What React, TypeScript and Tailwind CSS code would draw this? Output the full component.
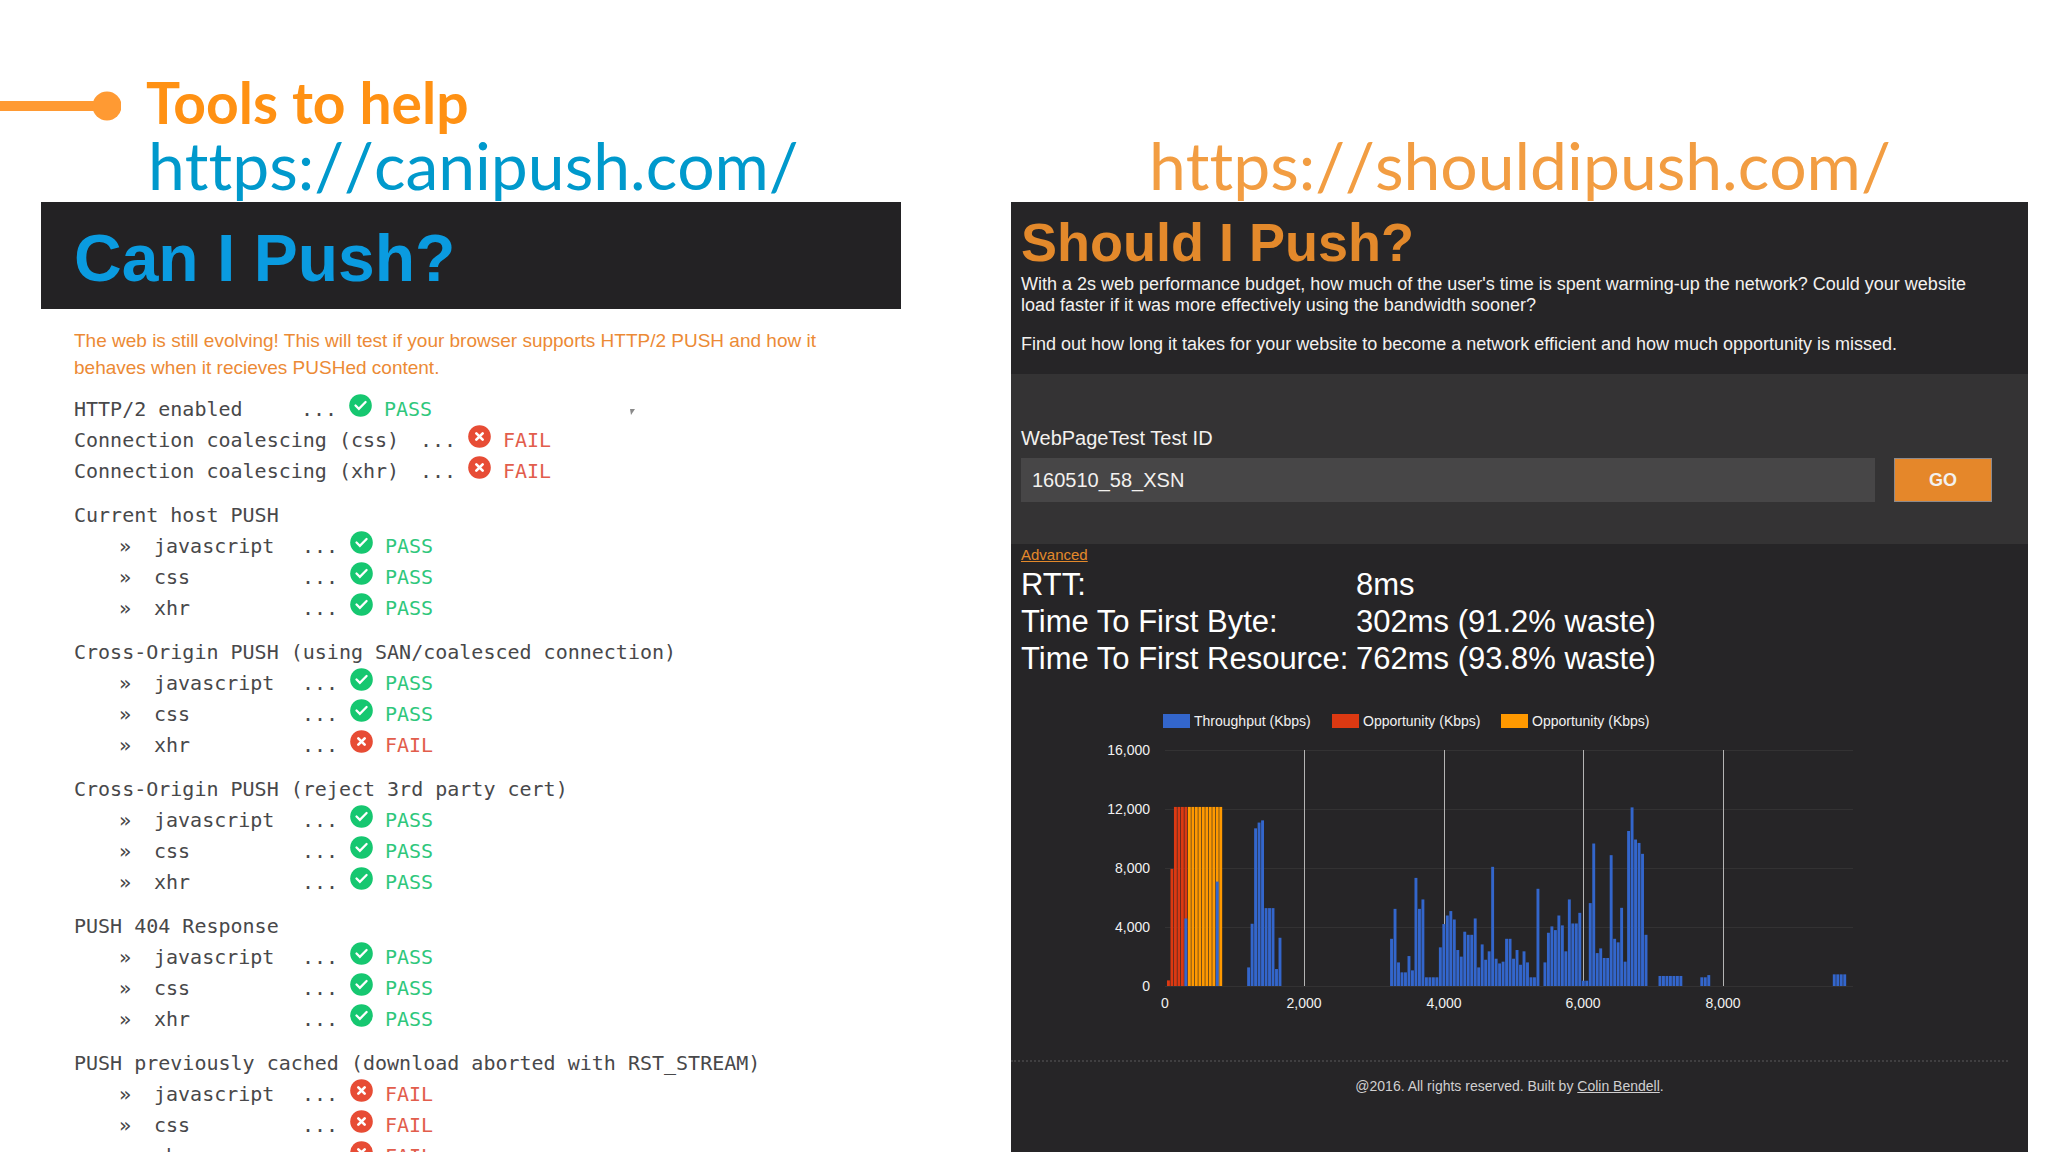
import { useState } from "react";

type Result = "PASS" | "FAIL";

interface Test {
  name: string;
  result: Result;
}

interface TestGroup {
  title: string;
  tests: Test[];
}

const groups: TestGroup[] = [
  {
    title: "Current host PUSH",
    tests: [
      { name: "javascript", result: "PASS" },
      { name: "css", result: "PASS" },
      { name: "xhr", result: "PASS" },
    ],
  },
  {
    title: "Cross-Origin PUSH (using SAN/coalesced connection)",
    tests: [
      { name: "javascript", result: "PASS" },
      { name: "css", result: "PASS" },
      { name: "xhr", result: "FAIL" },
    ],
  },
  {
    title: "Cross-Origin PUSH (reject 3rd party cert)",
    tests: [
      { name: "javascript", result: "PASS" },
      { name: "css", result: "PASS" },
      { name: "xhr", result: "PASS" },
    ],
  },
  {
    title: "PUSH 404 Response",
    tests: [
      { name: "javascript", result: "PASS" },
      { name: "css", result: "PASS" },
      { name: "xhr", result: "PASS" },
    ],
  },
  {
    title: "PUSH previously cached (download aborted with RST_STREAM)",
    tests: [
      { name: "javascript", result: "FAIL" },
      { name: "css", result: "FAIL" },
      { name: "xhr", result: "FAIL" },
    ],
  },
];

// Kbps samples, one per 50ms, keyed by the index of the first sample
const throughput: [number, number[]][] = [
  [6, [4580]],
  [15, [7080]],
  [24, [1260, 4220, 10690, 11080, 11230, 5280, 5280, 5280, 1150, 3270]],
  [65, [3200, 5230, 1600, 925, 925, 2030, 1060, 7330, 5230, 5870, 590, 590, 590, 590]],
  [79, [2620, 4200, 4780, 5080, 4510, 2440, 1990, 3680, 3470, 3470, 4580, 1260, 2820]],
  [92, [1780, 2350, 8080, 1850, 1530, 1650, 3200, 3200, 1850, 2440, 1440, 2350, 1600]],
  [105, [590, 590, 6590]],
  [109, [1600, 3610, 4040, 3790, 4780, 4110, 2350, 5870, 4240, 4240, 4960, 360, 360]],
  [122, [5620, 9660, 2230, 2550, 1900, 1900, 8870, 3200, 2960, 5300, 1650]],
  [133, [10510, 12110, 9930, 9700, 8960, 3470]],
  [142, [680, 680, 680, 680, 680, 680, 680]],
  [154, [590, 590, 740]],
  [192, [790, 790, 790, 790]],
];
const missed: [number, number[]][] = [[1, [380, 7940, 12140, 12140, 12140, 12140]]];
const wasted: [number, number[]][] = [
  [7, [12140, 12140, 12140, 12140, 12140, 12140, 12140, 12140, 12140, 12140]],
];

const LEFT = 74;
const BOTTOM = 286;
const BIN = 3.486;
const yOf = (kbps: number) => BOTTOM - (kbps / 16000) * 236;

function Bars({ data, fill }: { data: [number, number[]][]; fill: string }) {
  return (
    <g fill={fill}>
      {data.flatMap(([start, values]) =>
        values.map((v, i) => (
          <rect
            key={start + i}
            x={LEFT + (start + i) * BIN - 1.5}
            y={yOf(v)}
            width={2.9}
            height={BOTTOM - yOf(v)}
          />
        )),
      )}
    </g>
  );
}

function ThroughputChart() {
  const legend = [
    { x: 72, color: "#3366cc", label: "Throughput (Kbps)" },
    { x: 241, color: "#dc3912", label: "Opportunity (Kbps)" },
    { x: 410, color: "#ff9900", label: "Opportunity (Kbps)" },
  ];
  return (
    <svg
      width="780"
      height="320"
      viewBox="0 0 780 320"
      className="block text-sm"
      fill="#f1f1f1"
      role="img"
      aria-label="Throughput and opportunity over time"
    >
      {legend.map((l) => (
        <g key={l.x}>
          <rect x={l.x} y="14" width="27" height="14" fill={l.color} />
          <text x={l.x + 31} y="26">
            {l.label}
          </text>
        </g>
      ))}
      {[0, 4000, 8000, 12000, 16000].map((v) => (
        <g key={v}>
          <rect x={LEFT} y={Math.round(yOf(v))} width="688" height="1" fill="#333233" />
          <text x="59" y={Math.round(yOf(v)) + 5} textAnchor="end">
            {v.toLocaleString("en-US")}
          </text>
        </g>
      ))}
      {[0, 2000, 4000, 6000, 8000].map((v) => {
        const x = Math.round(LEFT + (v / 50) * BIN);
        return (
          <g key={v}>
            {v > 0 && <rect x={x} y="50" width="1" height="236" fill="#b4b4b4" />}
            <text x={x} y="308" textAnchor="middle">
              {v.toLocaleString("en-US")}
            </text>
          </g>
        );
      })}
      <Bars data={missed} fill="#dc3912" />
      <Bars data={wasted} fill="#ff9900" />
      <Bars data={throughput} fill="#3366cc" />
    </svg>
  );
}

function ResultIcon({ result }: { result: Result }) {
  return (
    <svg viewBox="0 0 24 24" className="mb-2 size-[23px] shrink-0" aria-hidden="true">
      <circle cx="12" cy="12" r="11.8" fill={result === "PASS" ? "#16c770" : "#e74c35"} />
      {result === "PASS" ? (
        <path
          d="M6.8 12l3.5 3.5 7-7.2"
          fill="none"
          stroke="#fff"
          strokeWidth="2.4"
          strokeLinecap="round"
        />
      ) : (
        <path
          d="M8.7 8.7l6.6 6.6M15.3 8.7l-6.6 6.6"
          fill="none"
          stroke="#fff"
          strokeWidth="2.8"
          strokeLinecap="round"
        />
      )}
    </svg>
  );
}

function Status({ result }: { result: Result }) {
  return (
    <>
      <span className="w-12">...</span>
      <ResultIcon result={result} />
      <span className={result === "PASS" ? "ml-3 text-[#2fc77c]" : "ml-3 text-[#e25d4c]"}>
        {result}
      </span>
    </>
  );
}

function CanIPush() {
  return (
    <section>
      <h2 className="pb-0.5 pl-[107px] font-[Lato,sans-serif] text-[66px] leading-[70px] text-[#0099cc] [font-kerning:none] [font-variant-ligatures:none]">
        <a href="https://canipush.com/">https://canipush.com/</a>
      </h2>
      <div className="flex h-[107px] items-center bg-[#232224] pt-1 pl-[33px]">
        <h3 className="text-[66px] leading-[72px] font-bold text-[#0a9be0]">Can I Push?</h3>
      </div>
      <p className="max-w-[800px] pt-[18px] pl-[33px] text-[19px] leading-[27px] text-[#ec8a35]">
        The web is still evolving! This will test if your browser supports HTTP/2 PUSH and how it
        behaves when it recieves PUSHed content.
      </p>
      <div className="relative flex flex-col gap-[13px] pt-[13px] pl-[33px] font-['DejaVu_Sans_Mono',monospace] text-xl leading-[31px] whitespace-nowrap text-[#48484a]">
        <ul>
          <li className="flex h-[31px] items-center">
            <span className="w-[227px]">HTTP/2 enabled</span>
            <Status result="PASS" />
          </li>
          <li className="flex h-[31px] items-center">
            <span className="w-[346px]">Connection coalescing (css)</span>
            <Status result="FAIL" />
          </li>
          <li className="flex h-[31px] items-center">
            <span className="w-[346px]">Connection coalescing (xhr)</span>
            <Status result="FAIL" />
          </li>
        </ul>
        {groups.map((group) => (
          <div key={group.title}>
            <h4>{group.title}</h4>
            <ul>
              {group.tests.map((test) => (
                <li key={test.name} className="flex h-[31px] items-center pl-[45px]">
                  <span className="w-[35px]">»</span>
                  <span className="w-[148px]">{test.name}</span>
                  <Status result={test.result} />
                </li>
              ))}
            </ul>
          </div>
        ))}
        <svg viewBox="0 0 6 6" className="absolute top-7 left-[588px] size-1.5" aria-hidden="true">
          <path d="M1 0h5L2 6z" fill="#8a8a8a" />
        </svg>
      </div>
    </section>
  );
}

function ShouldIPush() {
  const [testId, setTestId] = useState("160510_58_XSN");

  return (
    <section className="flex flex-col">
      <h2 className="pb-0.5 pl-[138px] font-[Lato,sans-serif] text-[66px] leading-[70px] text-[#f29d42] [font-kerning:none] [font-variant-ligatures:none]">
        <a href="https://shouldipush.com/">https://shouldipush.com/</a>
      </h2>
      <div className="grow bg-[#262527] text-[#f3f1ef]">
        <div className="h-[172px] pt-2 pr-9 pl-[10px] text-lg leading-[21px]">
          <h3 className="text-[54px] leading-[64px] font-bold text-[#e3892b]">Should I Push?</h3>
          <p>
            With a 2s web performance budget, how much of the user's time is spent warming-up the
            network? Could your website load faster if it was more effectively using the bandwidth
            sooner?
          </p>
          <p className="pt-[18px]">
            Find out how long it takes for your website to become a network efficient and how much
            opportunity is missed.
          </p>
        </div>
        <form
          className="h-[170px] bg-[#343334] pt-[50px] pr-9 pl-[10px]"
          onSubmit={(e) => e.preventDefault()}
        >
          <label htmlFor="test-id" className="block text-xl leading-7">
            WebPageTest Test ID
          </label>
          <div className="mt-1.5 flex gap-[19px]">
            <input
              id="test-id"
              type="text"
              value={testId}
              onChange={(e) => setTestId(e.target.value)}
              className="h-11 min-w-0 grow bg-[#474647] px-[11px] text-xl"
            />
            <button
              type="submit"
              className="h-11 w-[98px] border border-[#8d8a8c] bg-[#e5872a] text-lg font-bold"
            >
              GO
            </button>
          </div>
        </form>
        <div className="px-[10px]">
          <a href="#advanced" className="block text-[15px] leading-[22px] text-[#e3892b] underline">
            Advanced
          </a>
          <dl className="grid grid-cols-[335px_1fr] text-[31px] leading-[37px] text-white">
            <dt>RTT:</dt>
            <dd>8ms</dd>
            <dt>Time To First Byte:</dt>
            <dd>302ms (91.2% waste)</dd>
            <dt>Time To First Resource:</dt>
            <dd>762ms (93.8% waste)</dd>
          </dl>
        </div>
        <div className="pt-[23px] pl-20">
          <ThroughputChart />
        </div>
        <footer className="mt-10 mr-5 border-t-2 border-dotted border-[#403f41] pt-3 text-center text-sm leading-6 text-[#d0cfd0]">
          @2016. All rights reserved. Built by{" "}
          <a href="#colin-bendell" className="underline">
            Colin Bendell
          </a>
          .
        </footer>
      </div>
    </section>
  );
}

export default function App() {
  return (
    <main className="flex h-screen flex-col overflow-hidden bg-white font-['Liberation_Sans',Arial,sans-serif]">
      <header className="flex h-[130px] items-center gap-[25px] pt-[82px]">
        <svg viewBox="0 0 121 30" className="h-[30px] w-[121px]" aria-hidden="true">
          <path d="M0 10h107v10H0z" fill="#ff9a33" />
          <circle cx="107" cy="15" r="14.5" fill="#ff9a33" />
        </svg>
        <h1 className="pb-2 font-[Lato,sans-serif] text-[57px] leading-10 font-bold text-[#ff9113]">
          Tools to help
        </h1>
      </header>
      <div className="grid grow grid-cols-[860fr_1017fr] gap-[110px] pr-5 pl-[41px]">
        <CanIPush />
        <ShouldIPush />
      </div>
    </main>
  );
}
